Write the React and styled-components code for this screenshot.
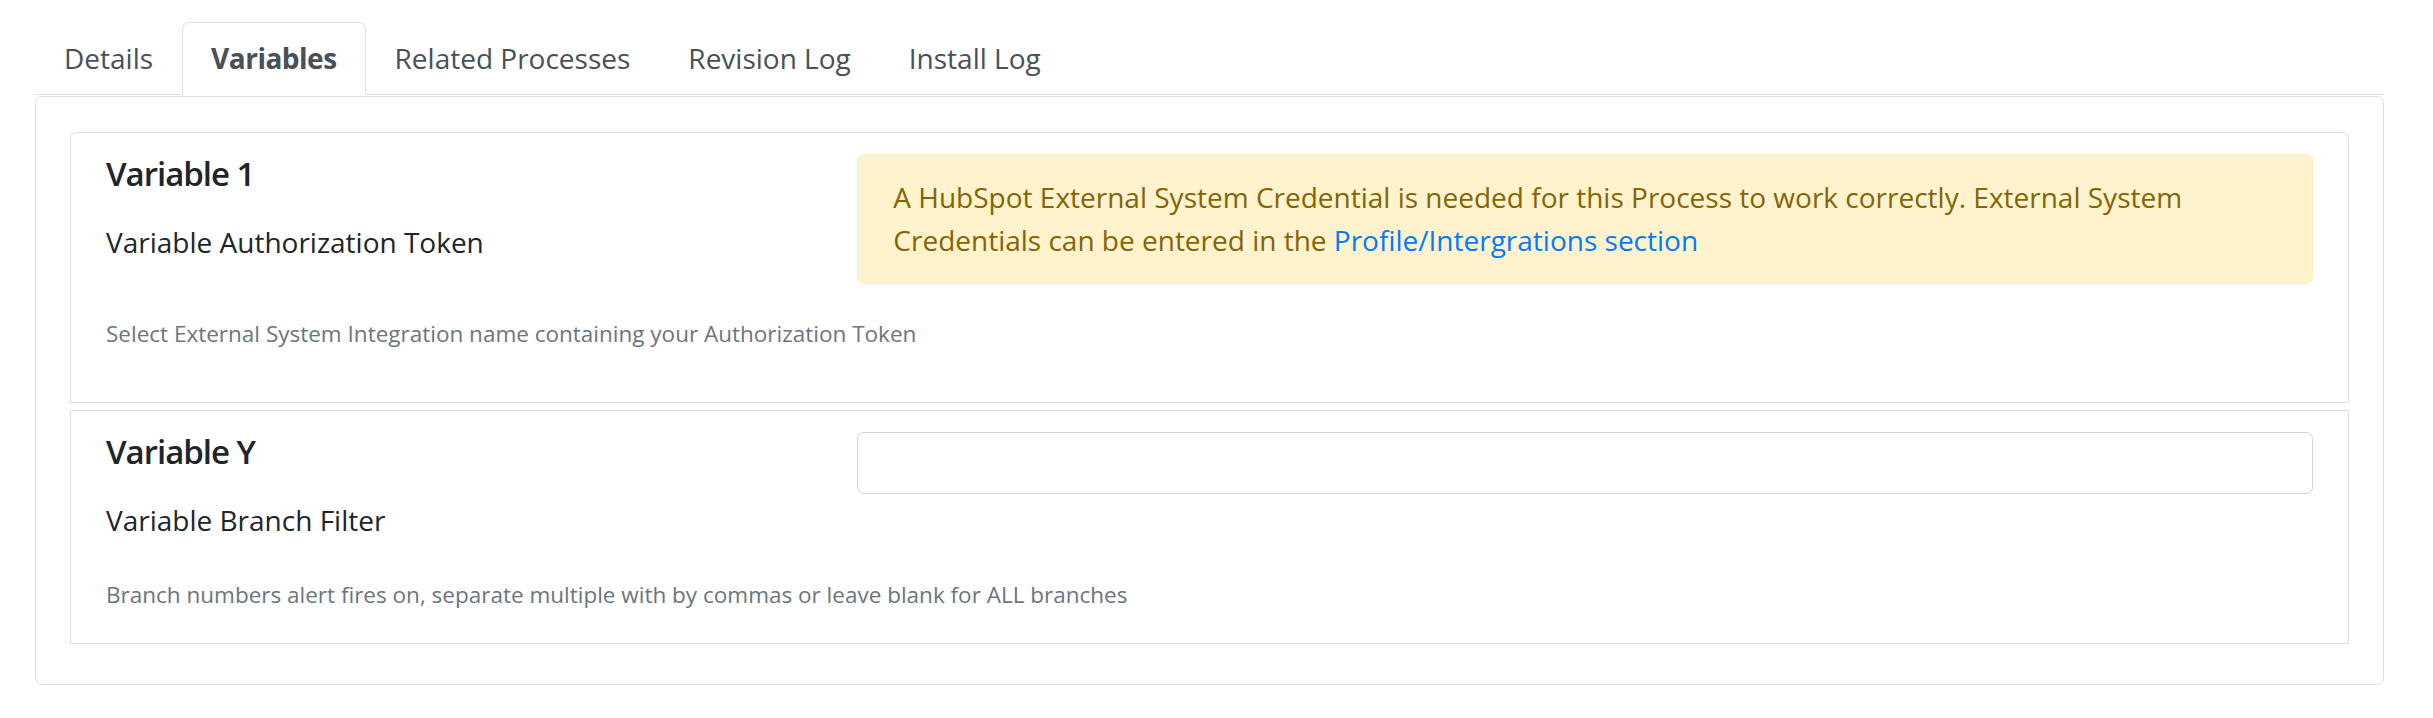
import React from 'react';
import styled, {createGlobalStyle} from 'styled-components';

const GlobalStyle = createGlobalStyle`
    body {
        margin: 0;
        background: #ffffff;
        font-family: "Open Sans", "Noto Sans", sans-serif;
        color: #212529;
    }
`

const Page = styled.div`
    padding: 22px 49px 0 35px;
`
const Tabs = styled.ul`
    display: flex;
    list-style: none;
    margin: 0;
    padding: 0;
    border-bottom: 1px solid #dee2e6;
`
const Tab = styled.li`
    margin-bottom: -1px;
    padding: 14px 28px;
    font-size: 28px;
    line-height: 43px;
    color: #495057;
    font-weight: ${props => props.active ? 700 : 400};
    letter-spacing: ${props => props.active ? '-0.5px' : '0'};
    border: 1px solid ${props => props.active ? '#dee2e6' : 'transparent'};
    border-bottom-color: ${props => props.active ? '#ffffff' : 'transparent'};
    border-radius: 7px 7px 0 0;
    background: ${props => props.active ? '#ffffff' : 'transparent'};
`
const Card = styled.div`
    margin-top: 1px;
    border: 1px solid rgba(0, 0, 0, 0.125);
    border-radius: 7px;
    padding: 35px 34px 40px 34px;
`
const Panel = styled.div`
    border: 1px solid rgba(0, 0, 0, 0.125);
    border-radius: ${props => props.first ? '7px 7px 0 0' : '0'};
    padding: 21px 35px ${props => props.bottom}px 35px;
    margin-bottom: ${props => props.first ? '7px' : '0'};
`
const Row = styled.div`
    display: flex;
    margin: 0 -23.5px;
`
const Col = styled.div`
    flex: 0 0 ${props => props.size};
    max-width: ${props => props.size};
    box-sizing: border-box;
    padding: 0 23.5px;
`
const Heading = styled.h5`
    margin: 0 0 27px 0;
    font-size: 33px;
    line-height: 39.6px;
    font-weight: 600;
    letter-spacing: -1px;
    color: #212529;
`
const Label = styled.div`
    font-size: 28px;
    line-height: 43.2px;
    color: #212529;
    margin-bottom: 36px;
`
const Alert = styled.div`
    box-sizing: border-box;
    padding: 21px 35px;
    margin-bottom: 33px;
    font-size: 28px;
    line-height: 43.2px;
    color: #856404;
    background: #fff3cd;
    border: 1px solid #ffeeba;
    border-radius: 7px;
`
const Link = styled.a`
    color: #007bff;
    text-decoration: none;
`
const Input = styled.input`
    display: block;
    box-sizing: border-box;
    width: 100%;
    height: 62px;
    margin: 0;
    padding: 10px 20px;
    font-size: 28px;
    font-family: inherit;
    border: 1px solid #ced4da;
    border-radius: 7px;
    background: #ffffff;
`
const Help = styled.small`
    display: block;
    font-size: 22.5px;
    line-height: 34.5px;
    color: #6c757d;
`

const variables = [
    {
        name: 'Variable 1',
        label: 'Variable Authorization Token',
        help: 'Select External System Integration name containing your Authorization Token',
        alert: true,
        bottom: 50,
    },
    {
        name: 'Variable Y',
        label: 'Variable Branch Filter',
        help: 'Branch numbers alert fires on, separate multiple with by commas or leave blank for ALL branches',
        alert: false,
        bottom: 31,
    },
];

export default function App() {
    const tabs = ['Details', 'Variables', 'Related Processes', 'Revision Log', 'Install Log'];
    return (
        <Page>
            <GlobalStyle />
            <Tabs>
                {tabs.map(t => <Tab key={t} active={t === 'Variables'}>{t}</Tab>)}
            </Tabs>
            <Card>
                {variables.map((v, i) => (
                    <Panel key={v.name} first={i === 0} bottom={v.bottom}>
                        <Row>
                            <Col size='33.3333%'>
                                <Heading>{v.name}</Heading>
                                <Label>{v.label}</Label>
                            </Col>
                            <Col size='66.6667%'>
                                {v.alert ? (
                                    <Alert>
                                        A HubSpot External System Credential is needed for this Process to work correctly. External System Credentials can be entered in the <Link href='#'>Profile/Intergrations section</Link>
                                    </Alert>
                                ) : (
                                    <Input type='text' />
                                )}
                            </Col>
                        </Row>
                        <Help>{v.help}</Help>
                    </Panel>
                ))}
            </Card>
        </Page>
    )
}
